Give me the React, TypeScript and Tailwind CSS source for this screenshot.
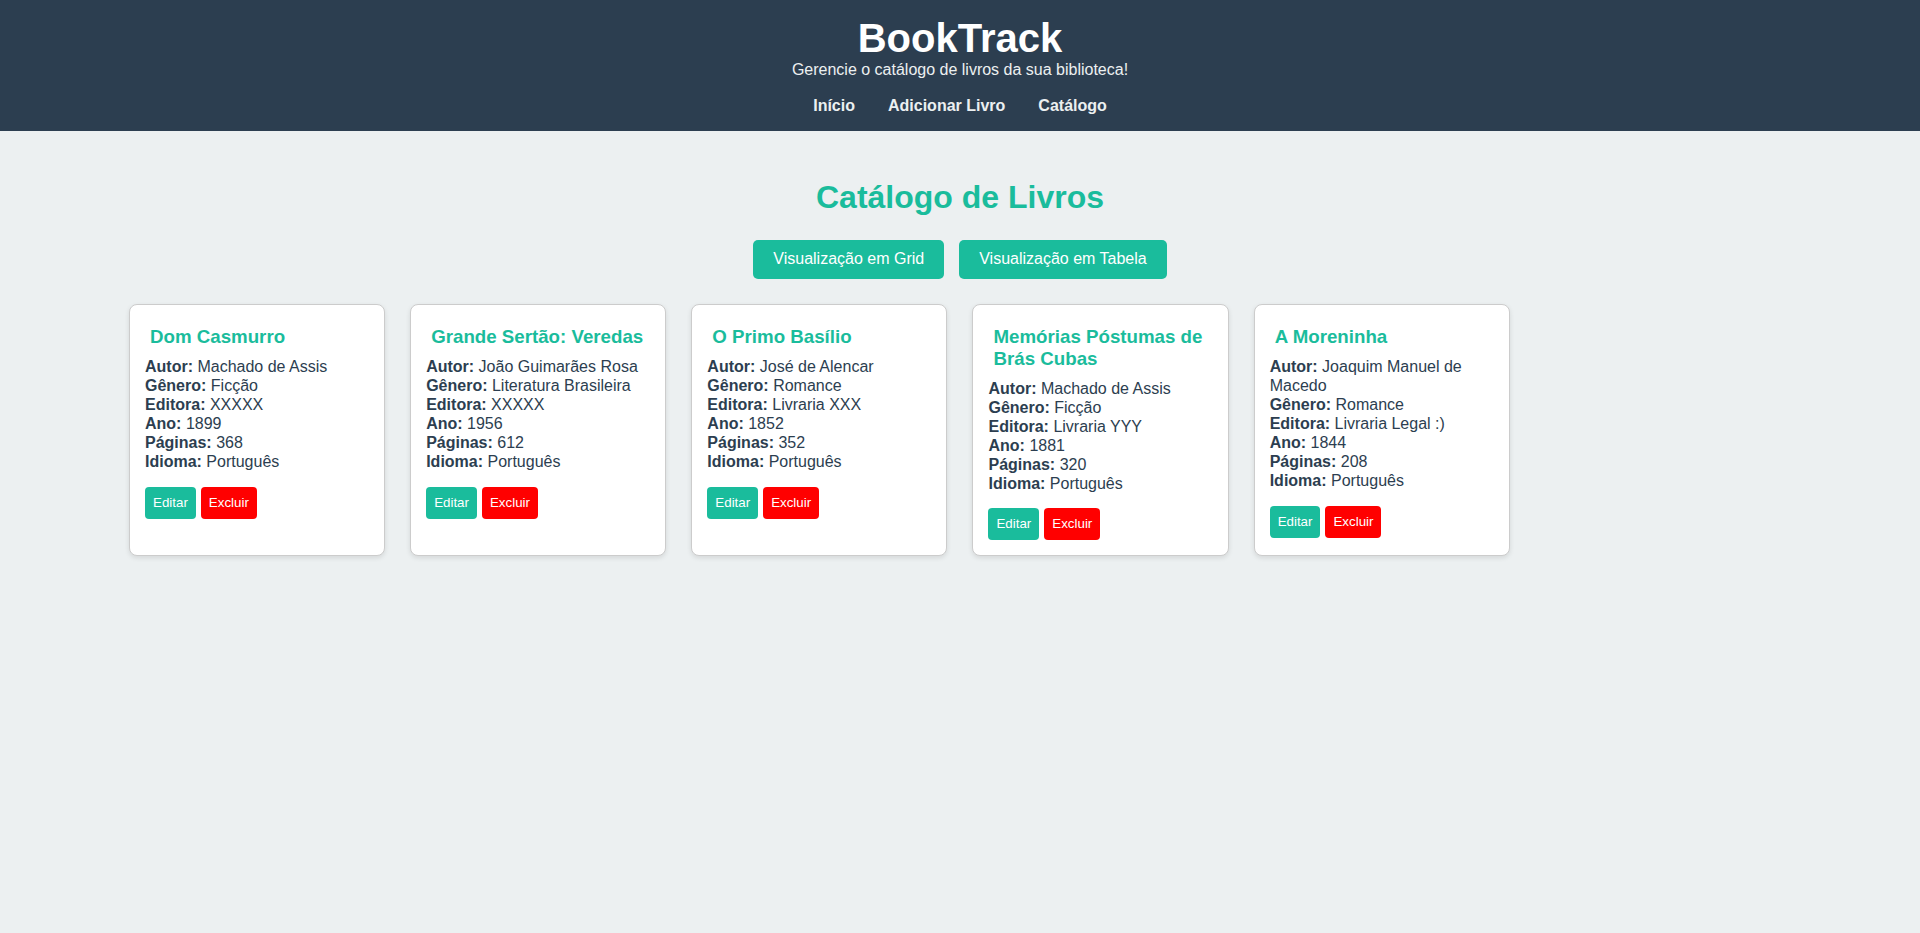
import React from 'react';

interface Livro {
  titulo: string;
  autor: string;
  genero: string;
  editora: string;
  ano: number;
  paginas: number;
  idioma: string;
}

const livros: Livro[] = [
  { titulo: 'Dom Casmurro', autor: 'Machado de Assis', genero: 'Ficção', editora: 'XXXXX', ano: 1899, paginas: 368, idioma: 'Português' },
  { titulo: 'Grande Sertão: Veredas', autor: 'João Guimarães Rosa', genero: 'Literatura Brasileira', editora: 'XXXXX', ano: 1956, paginas: 612, idioma: 'Português' },
  { titulo: 'O Primo Basílio', autor: 'José de Alencar', genero: 'Romance', editora: 'Livraria XXX', ano: 1852, paginas: 352, idioma: 'Português' },
  { titulo: 'Memórias Póstumas de Brás Cubas', autor: 'Machado de Assis', genero: 'Ficção', editora: 'Livraria YYY', ano: 1881, paginas: 320, idioma: 'Português' },
  { titulo: 'A Moreninha', autor: 'Joaquim Manuel de Macedo', genero: 'Romance', editora: 'Livraria Legal :)', ano: 1844, paginas: 208, idioma: 'Português' },
];

function Campo({ label, valor }: { label: string; valor: string | number }) {
  return (
    <p className="m-0">
      <strong className="font-bold">{label}:</strong> {valor}
    </p>
  );
}

function CardLivro({ livro }: { livro: Livro }) {
  return (
    <div className="bg-white border border-[#cccccc] rounded-[8px] shadow-[0_2px_5px_rgba(0,0,0,0.1)] p-[15px]">
      <h3 className="m-0 px-[5px] pt-[6.5px] pb-[4.5px] text-[18.72px] leading-[21.5px] font-bold text-[#1abc9c]">
        {livro.titulo}
      </h3>
      <div className="mt-[5px] text-[16px] leading-[19px] text-[#2c3e50]">
        <Campo label="Autor" valor={livro.autor} />
        <Campo label="Gênero" valor={livro.genero} />
        <Campo label="Editora" valor={livro.editora} />
        <Campo label="Ano" valor={livro.ano} />
        <Campo label="Páginas" valor={livro.paginas} />
        <Campo label="Idioma" valor={livro.idioma} />
      </div>
      <div className="mt-[15.5px] flex gap-[5px]">
        <button className="bg-[#1abc9c] text-white text-[13.33px] leading-[15.3px] px-[8px] py-[8.3px] rounded-[4px]">
          Editar
        </button>
        <button className="bg-[#ff0000] text-white text-[13.33px] leading-[15.3px] px-[8px] py-[8.3px] rounded-[4px]">
          Excluir
        </button>
      </div>
    </div>
  );
}

export default function App() {
  return (
    <div className="min-h-[933px] bg-[#ecf0f1] text-[#2c3e50] font-['Liberation_Sans',Arial,sans-serif]">
      {/* Cabeçalho */}
      <header className="bg-[#2c3e50] text-center pt-[15px] pb-[15.5px]">
        <h1 className="m-0 text-[40px] leading-[46px] font-bold text-white">BookTrack</h1>
        <p className="m-0 text-[16px] leading-[18.4px] text-[#ecf0f1]">Gerencie o catálogo de livros da sua biblioteca!</p>
        <nav className="mt-[17.5px] flex justify-center gap-[33px] text-[16px] leading-[18.4px] font-bold text-[#ecf0f1]">
          <a href="#">Início</a>
          <a href="#">Adicionar Livro</a>
          <a href="#">Catálogo</a>
        </nav>
      </header>

      <main className="pt-[20px]">
        <h2 className="mt-[28.5px] mb-[23.5px] text-center text-[32px] leading-[36.8px] font-bold text-[#1abc9c]">
          Catálogo de Livros
        </h2>

        <div className="flex justify-center gap-[15px] mb-[25px]">
          <button className="bg-[#1abc9c] text-white text-[16px] leading-[18.4px] px-[20px] py-[10.3px] rounded-[5px]">
            Visualização em Grid
          </button>
          <button className="bg-[#1abc9c] text-white text-[16px] leading-[18.4px] px-[20px] py-[10.3px] rounded-[5px]">
            Visualização em Tabela
          </button>
        </div>

        <div className="grid grid-cols-[repeat(auto-fill,minmax(250px,1fr))] gap-[25px] px-[129px]">
          {livros.map((livro) => (
            <CardLivro key={livro.titulo} livro={livro} />
          ))}
        </div>
      </main>
    </div>
  );
}
